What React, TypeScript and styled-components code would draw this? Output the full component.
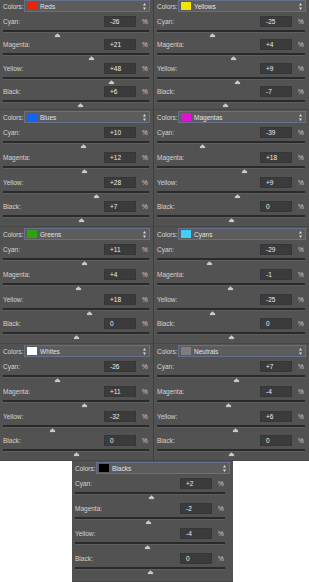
import React from "react";
import styled, { createGlobalStyle } from "styled-components";

const Global = createGlobalStyle`
  html, body { margin: 0; padding: 0; background: #ffffff; }
  body { font-family: "Liberation Sans", Arial, sans-serif; }
`;

type Sel = { name: string; swatch: string; values: number[] };

const DATA: Sel[] = [
  { name: "Reds", swatch: "#e3260f", values: [-26, 21, 48, 6] },
  { name: "Yellows", swatch: "#f4e400", values: [-25, 4, 9, -7] },
  { name: "Blues", swatch: "#1462f2", values: [10, 12, 28, 7] },
  { name: "Magentas", swatch: "#e012d4", values: [-39, 18, 9, 0] },
  { name: "Greens", swatch: "#2ea312", values: [11, 4, 18, 0] },
  { name: "Cyans", swatch: "#3fd0fa", values: [-29, -1, -25, 0] },
  { name: "Whites", swatch: "#ffffff", values: [-26, 11, -32, 0] },
  { name: "Neutrals", swatch: "#7e7e7e", values: [7, -4, 6, 0] },
];
const BLACKS: Sel = { name: "Blacks", swatch: "#000000", values: [2, -2, -4, 0] };
const LABELS = ["Cyan:", "Magenta:", "Yellow:", "Black:"];

const Page = styled.div`
  width: 309px;
  display: flex;
  flex-direction: column;
`;

const Grid = styled.div`
  display: grid;
  grid-template-columns: 154px 155px;
  grid-template-rows: 110px 117px 117px 117px;
`;

const BottomRow = styled.div`
  display: flex;
  padding-left: 72px;
  height: 121px;
`;

const Panel = styled.div<{ $pt: number; $padR: number; $left?: boolean; $w?: number }>`
  box-sizing: border-box;
  ${(p) => (p.$w ? `width: ${p.$w}px;` : "")}
  height: 100%;
  overflow: hidden;
  background: #525252;
  padding: ${(p) => p.$pt}px ${(p) => p.$padR}px 0 3px;
  border-right: ${(p) => (p.$left ? "1px solid #3f3f3f" : "none")};
  border-bottom: 1px solid #474747;
  display: flex;
  flex-direction: column;
  color: #d6d6d6;
  font-size: 6.5px;
`;

const Header = styled.div<{ $padR: number }>`
  display: flex;
  align-items: center;
  height: 12px;
  margin-right: ${(p) => 3 - p.$padR}px;
  margin-bottom: 4px;
`;

const HeaderLabel = styled.span`
  width: 21px;
  flex: none;
  color: #d8d8d8;
`;

const Dropdown = styled.div`
  flex: 1;
  box-sizing: border-box;
  height: 12px;
  display: flex;
  align-items: center;
  gap: 3px;
  padding: 0 3px 0 2px;
  background: #5c5c5c;
  border: 1px solid #65708c;
  color: #e2e2e2;
`;

const Swatch = styled.span<{ $c: string }>`
  width: 10px;
  height: 8px;
  background: ${(p) => p.$c};
  flex: none;
`;

const DropText = styled.span`
  flex: 1;
`;

const Row = styled.div`
  height: 25px;
  display: flex;
  flex-direction: column;
`;

const Line = styled.div`
  display: flex;
  align-items: center;
  height: 11px;
`;

const Label = styled.span`
  flex: 1;
  color: #d2d2d2;
`;

const ValueBox = styled.span`
  width: 32px;
  height: 11px;
  box-sizing: border-box;
  background: #3b3b3b;
  border: 1px solid #363636;
  color: #ececec;
  padding-left: 5px;
  display: flex;
  align-items: center;
  font-size: 6.5px;
`;

const Percent = styled.span`
  width: 7px;
  margin-left: 6px;
  color: #cfcfcf;
`;

const TrackWrap = styled.div`
  position: relative;
  margin-top: 3px;
  height: 8px;
`;

const TrackLine = styled.div`
  height: 2px;
  background: #2a2a2a;
  border-bottom: 1px solid #5e5e5e;
`;

const Thumb = styled.svg`
  position: absolute;
  top: 3px;
  width: 7px;
  height: 5px;
  display: block;
`;

function Arrows() {
  return (
    <svg width="3" height="7" viewBox="0 0 3 7" style={{ flex: "none" }}>
      <polygon points="1.5,0 3,2.5 0,2.5" fill="#d8d8d8" />
      <polygon points="0,4.5 3,4.5 1.5,7" fill="#d8d8d8" />
    </svg>
  );
}

function SliderRow({ label, value }: { label: string; value: number }) {
  const pct = (value + 100) / 2;
  const txt = value > 0 ? `+${value}` : `${value}`;
  return (
    <Row>
      <Line>
        <Label>{label}</Label>
        <ValueBox>{txt}</ValueBox>
        <Percent>%</Percent>
      </Line>
      <TrackWrap>
        <TrackLine />
        <Thumb viewBox="0 0 7 5" style={{ left: `calc(${pct}% - 3.5px)` }}>
          <polygon points="3.5,0 6.5,2.5 6.5,4.5 0.5,4.5 0.5,2.5" fill="#c9c9c9" stroke="#3a3a3a" strokeWidth="0.6" />
        </Thumb>
      </TrackWrap>
    </Row>
  );
}

function ColorPanel({ sel, pt, padR, left, w }: { sel: Sel; pt: number; padR: number; left?: boolean; w?: number }) {
  return (
    <Panel $pt={pt} $padR={padR} $left={left} $w={w}>
      <Header $padR={padR}>
        <HeaderLabel>Colors:</HeaderLabel>
        <Dropdown>
          <Swatch $c={sel.swatch} />
          <DropText>{sel.name}</DropText>
          <Arrows />
        </Dropdown>
      </Header>
      {sel.values.map((v, i) => (
        <SliderRow key={LABELS[i]} label={LABELS[i]} value={v} />
      ))}
    </Panel>
  );
}

export default function App() {
  return (
    <Page>
      <Global />
      <Grid>
        {DATA.map((s, i) => (
          <ColorPanel key={s.name} sel={s} pt={i < 2 ? 0 : 1} padR={4} left={i % 2 === 0} />
        ))}
      </Grid>
      <BottomRow>
        <ColorPanel sel={BLACKS} pt={1} padR={8} w={161} />
      </BottomRow>
    </Page>
  );
}
